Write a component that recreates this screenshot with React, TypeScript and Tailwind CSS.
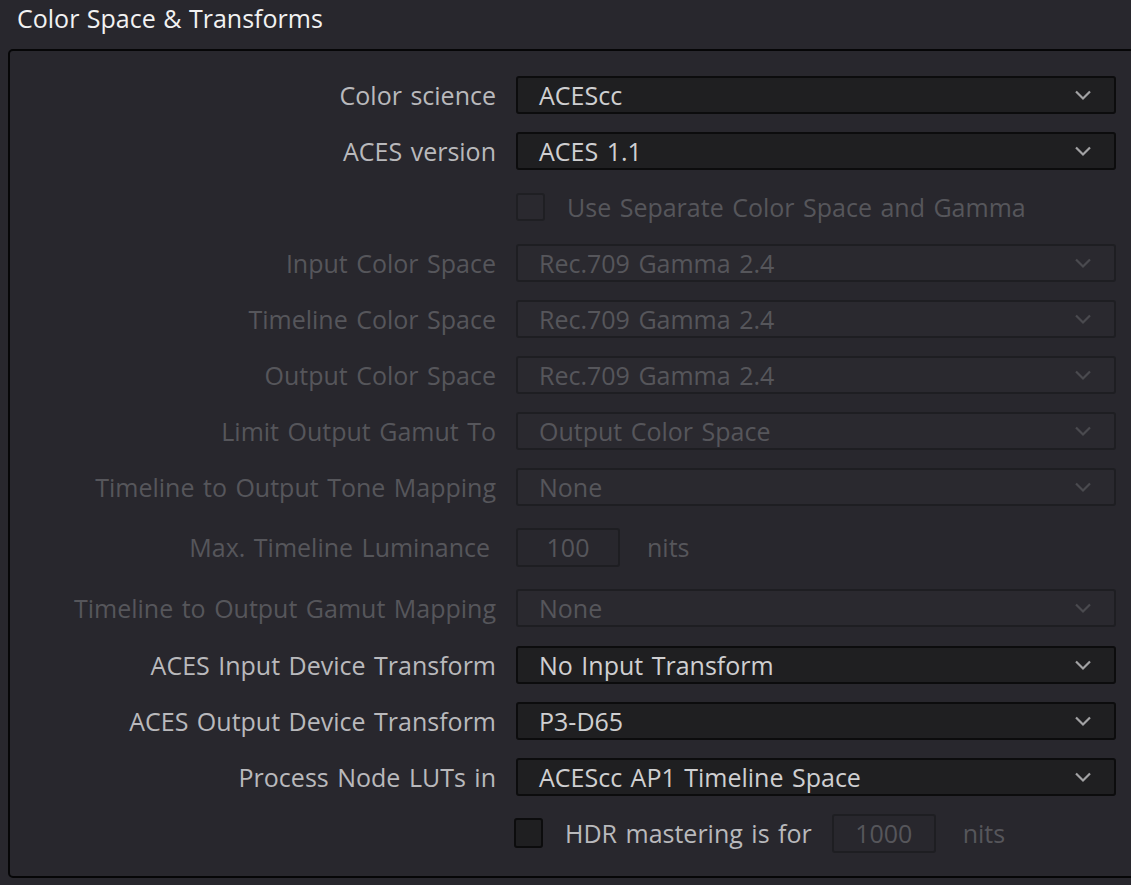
import React from 'react'

type Row =
  | { kind: 'select'; label: string; value: string; on: boolean }
  | { kind: 'check'; label: string; on: boolean }
  | { kind: 'nits'; label: string; value: string }

const rows: Row[] = [
  { kind: 'select', label: 'Color science', value: 'ACEScc', on: true },
  { kind: 'select', label: 'ACES version', value: 'ACES 1.1', on: true },
  { kind: 'check', label: 'Use Separate Color Space and Gamma', on: false },
  { kind: 'select', label: 'Input Color Space', value: 'Rec.709 Gamma 2.4', on: false },
  { kind: 'select', label: 'Timeline Color Space', value: 'Rec.709 Gamma 2.4', on: false },
  { kind: 'select', label: 'Output Color Space', value: 'Rec.709 Gamma 2.4', on: false },
  { kind: 'select', label: 'Limit Output Gamut To', value: 'Output Color Space', on: false },
  { kind: 'select', label: 'Timeline to Output Tone Mapping', value: 'None', on: false },
  { kind: 'nits', label: 'Max. Timeline Luminance', value: '100' },
  { kind: 'select', label: 'Timeline to Output Gamut Mapping', value: 'None', on: false },
  { kind: 'select', label: 'ACES Input Device Transform', value: 'No Input Transform', on: true },
  { kind: 'select', label: 'ACES Output Device Transform', value: 'P3-D65', on: true },
  { kind: 'select', label: 'Process Node LUTs in', value: 'ACEScc AP1 Timeline Space', on: true },
]

function Chevron({ on }: { on: boolean }) {
  return (
    <svg width="18" height="12" viewBox="0 0 18 12" className={on ? 'text-[#a2a2a4]' : 'text-[#4a4a4f]'}>
      <path d="M2 2.5 L9 9.5 L16 2.5" fill="none" stroke="currentColor" strokeWidth="2.2" />
    </svg>
  )
}

function Select({ value, on }: { value: string; on: boolean }) {
  return (
    <div
      className={`flex-1 h-[38px] flex items-center justify-between pl-[21px] pr-[22px] rounded-[3px] border-2 ${
        on ? 'bg-[#1f1f21] border-[#0c0c0d] text-[#cfcfd1]' : 'bg-[#2a292f] border-[#1e1e22] text-[#56565b]'
      }`}
    >
      <span>{value}</span>
      <Chevron on={on} />
    </div>
  )
}

export default function App() {
  return (
    <div
      className="w-[1131px] h-[885px] overflow-hidden bg-[#28272d] text-[25px] leading-none"
      style={{ fontFamily: '"Open Sans", "Noto Sans", sans-serif' }}
    >
      <div className="h-[36px] pl-[17px] flex items-center text-[#f2f2f2] [word-spacing:1px]">Color Space &amp; Transforms</div>
      <div className="ml-[8px] mt-[13px] w-[1140px] h-[829px] border-2 border-[#060607] rounded-[5px] pt-[16px] [word-spacing:2px]">
        <div className="flex flex-col">
          {rows.map((r, i) => {
            if (r.kind === 'check') {
              return (
                <div key={i} className="h-[56px] flex items-center">
                  <div className="w-[506px]" />
                  <div className="w-[29px] h-[28px] rounded-[3px] border-2 border-[#1f1f23] bg-[#2a292f]" />
                  <span className="ml-[22px] text-[#56565b]">{r.label}</span>
                </div>
              )
            }
            if (r.kind === 'nits') {
              return (
                <div key={i} className="h-[64px] flex items-center">
                  <div className="w-[480px] text-right text-[#56565b]">{r.label}</div>
                  <div className="ml-[26px] w-[104px] h-[39px] rounded-[3px] border-2 border-[#1e1e22] flex items-center justify-center text-[#56565b]">
                    {r.value}
                  </div>
                  <span className="ml-[27px] text-[#56565b]">nits</span>
                </div>
              )
            }
            return (
              <div key={i} className={`${i === 9 ? 'h-[58px]' : 'h-[56px]'} flex items-center pr-[30px]`}>
                <div className={`w-[486px] text-right ${r.on ? 'text-[#b9b9bc]' : 'text-[#56565b]'}`}>{r.label}</div>
                <div className="w-[20px]" />
                <Select value={r.value} on={r.on} />
              </div>
            )
          })}
          <div className="h-[56px] flex items-center">
            <div className="w-[504px]" />
            <div className="w-[29px] h-[30px] rounded-[3px] border-2 border-[#0c0c0d] bg-[#1f1f21]" />
            <span className="ml-[22px] text-[#b9b9bc]">HDR mastering is for</span>
            <div className="ml-[20px] w-[104px] h-[39px] rounded-[3px] border-2 border-[#1e1e22] flex items-center justify-center text-[#56565b]">
              1000
            </div>
            <span className="ml-[27px] text-[#56565b]">nits</span>
          </div>
        </div>
      </div>
    </div>
  )
}
